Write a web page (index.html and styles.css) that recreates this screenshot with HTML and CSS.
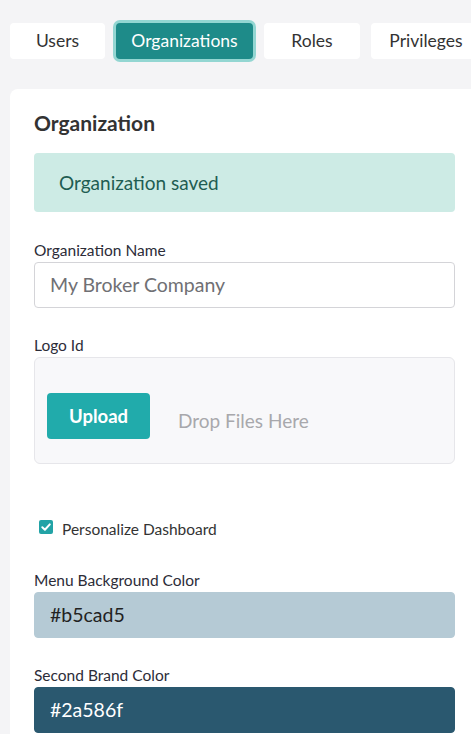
FILE: index.html
```html
<!DOCTYPE html>
<html>
<head>
<meta charset="utf-8">
<link rel="stylesheet" href="styles.css">
</head>
<body>
<nav class="tabs">
  <div class="tab tab-users">Users</div>
  <div class="tab tab-active">Organizations</div>
  <div class="tab tab-roles">Roles</div>
  <div class="tab tab-priv">Privileges</div>
</nav>
<main class="card">
  <h1 class="title">Organization</h1>
  <div class="alert">Organization saved</div>
  <label class="label first">Organization Name</label>
  <div class="input">My Broker Company</div>
  <label class="label">Logo Id</label>
  <div class="dropzone">
    <div class="upload">Upload</div>
    <div class="drop-text">Drop Files Here</div>
  </div>
  <div class="check-row">
    <span class="checkbox"><svg viewBox="0 0 14 14" width="14" height="14"><path d="M3.3 7.2 L5.9 9.7 L10.8 4.4" fill="none" stroke="#fff" stroke-width="2" stroke-linecap="round" stroke-linejoin="round"/></svg></span>
    <span class="check-label">Personalize Dashboard</span>
  </div>
  <label class="label color-label">Menu Background Color</label>
  <div class="input color-light">#b5cad5</div>
  <label class="label second">Second Brand Color</label>
  <div class="input color-dark">#2a586f</div>
</main>
</body>
</html>
```
FILE: styles.css
```css
html, body {
  margin: 0;
  padding: 0;
}
body {
  background: #f4f4f6;
  font-family: Lato, "Open Sans", sans-serif;
  color: #333;
  width: 471px;
  height: 734px;
  overflow: hidden;
}
.tabs {
  display: flex;
  gap: 11px;
  padding: 23px 0 0 10px;
  height: 36px;
  white-space: nowrap;
}
.tab {
  background: #fff;
  border-radius: 4px;
  height: 36px;
  line-height: 36px;
  font-size: 17.5px;
  text-align: center;
  color: #333;
  flex: none;
}
.tab-users { width: 95px; }
.tab-active {
  width: 137px;
  background: #1e8b89;
  color: #fff;
  box-shadow: 0 0 0 3px #93d6d2;
}
.tab-roles { width: 96px; }
.tab-priv { width: 110px; }
.card {
  display: block;
  margin: 30px 0 0 10px;
  width: 421px;
  padding: 22px 24px 12px 24px;
  background: #fff;
  border-radius: 8px;
}
.title {
  margin: 0;
  font-size: 21px;
  line-height: 24px;
  font-weight: 700;
  color: #333;
}
.alert {
  margin-top: 18px;
  height: 59px;
  line-height: 59px;
  background: #cdebe5;
  border-radius: 4px;
  padding-left: 25px;
  font-size: 19px;
  color: #1f5d52;
}
.label {
  display: block;
  font-size: 15.5px;
  line-height: 18px;
  margin: 28px 0 3px;
  color: #2c2c38;
}
.label.first { margin-top: 29px; }
.input {
  box-sizing: border-box;
  height: 46px;
  line-height: 44px;
  border: 1px solid #d4d4d8;
  border-radius: 4px;
  padding-left: 15px;
  font-size: 19.5px;
  color: #707074;
}
.dropzone {
  box-sizing: border-box;
  height: 107px;
  background: #f8f8fa;
  border: 1px solid #e6e6ea;
  border-radius: 6px;
  display: flex;
  align-items: center;
  gap: 28px;
  padding: 11px 12px 0;
}
.upload {
  width: 103px;
  height: 46px;
  line-height: 46px;
  background: #21abab;
  border-radius: 4px;
  color: #fff;
  font-weight: 700;
  font-size: 18.5px;
  text-align: center;
}
.drop-text {
  font-size: 19px;
  color: #a8a8ac;
  padding-top: 8px;
}
.check-row {
  display: flex;
  align-items: center;
  margin-top: 56px;
  padding-left: 5px;
  height: 18px;
}
.checkbox {
  width: 14px;
  height: 14px;
  background: #22a3a6;
  border-radius: 2px;
  display: flex;
  margin-top: -4px;
}
.check-label {
  margin-left: 9px;
  font-size: 15.5px;
  color: #333;
}
.label.color-label { margin-top: 33px; }
.label.second { margin-top: 28px; }
.color-light {
  background: #b5cad5;
  border-color: #b5cad5;
  color: #222;
}
.color-dark {
  background: #2a586f;
  border-color: #2a586f;
  color: #fff;
}
```
